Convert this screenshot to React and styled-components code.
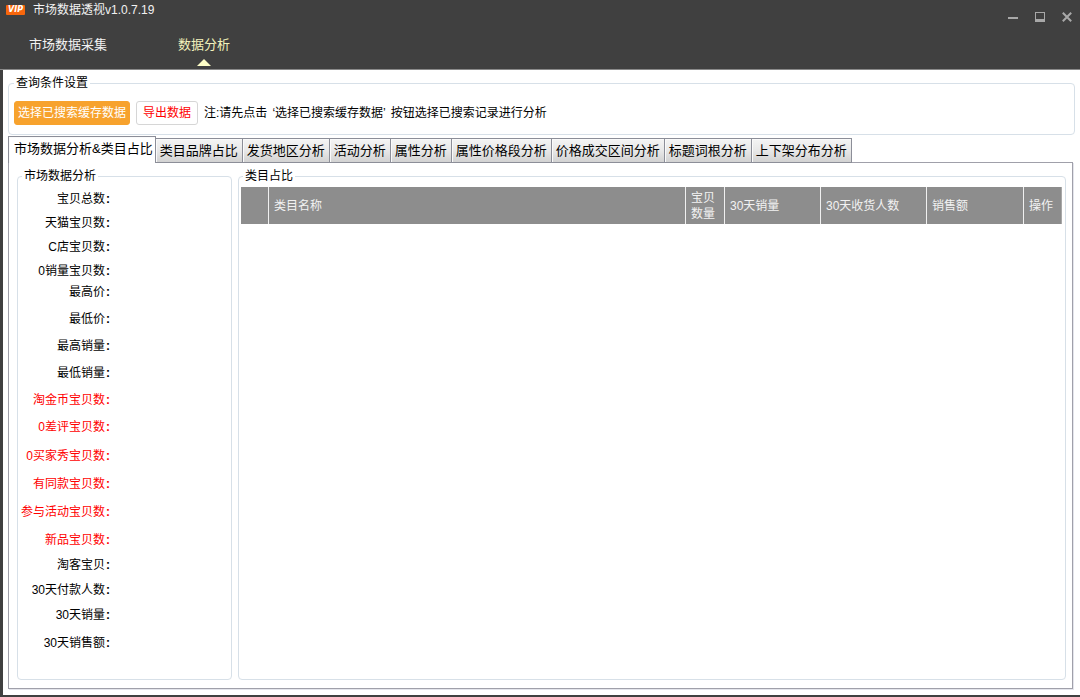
import React, { useState } from "react";
import styled, { createGlobalStyle } from "styled-components";

const GlobalStyle = createGlobalStyle`
  * {
    box-sizing: border-box;
  }

  body {
    margin: 0;
    color: #000;
    font-family: "Liberation Sans", "Noto Sans CJK SC", sans-serif;
    font-size: 12px;
    line-height: 16px;
  }

  button {
    font: inherit;
    padding: 0;
  }
`;

const Window = styled.div`
  display: flex;
  flex-direction: column;
  min-height: 100vh;
  background-color: #fff;
  border-left: 3px solid #404040;
  border-bottom: 2px solid #404040;
`;

const Header = styled.header`
  margin-left: -3px;
  background-color: #404040;
  border-bottom: 1px solid #8a8a8a;
`;

const TitleBar = styled.div`
  display: flex;
  justify-content: space-between;
  align-items: flex-start;
  height: 34px;
`;

const Brand = styled.div`
  display: flex;
  align-items: center;
  gap: 8px;
  height: 20px;
  padding-left: 6px;
`;

const VipBadge = styled.span`
  width: 19px;
  height: 10px;
  border-radius: 1px;
  background-color: #f8660c;
  color: #fff;
  font: italic bold 8px/10px "DejaVu Sans", sans-serif;
  text-align: center;
`;

const AppTitle = styled.h1`
  margin: 0;
  color: #f2f2f2;
  font-size: 12px;
  font-weight: normal;
`;

const WindowControls = styled.div`
  display: flex;
`;

const ControlButton = styled.button`
  display: flex;
  align-items: center;
  justify-content: center;
  width: 27px;
  height: 34px;
  border: 0;
  background: none;
  color: #a8a8a8;
`;

const Nav = styled.nav`
  display: flex;
  gap: 71px;
  height: 35px;
  padding-left: 29px;
`;

const NavLink = styled.a`
  display: flex;
  flex-direction: column;
  align-items: center;
  gap: 3px;
  color: ${props => (props.$active ? "#f2f2bc" : "#f2f2f2")};
  font-size: 13px;
  line-height: 22px;
  text-decoration: none;
`;

const Arrow = styled.span`
  border: 7px solid transparent;
  border-top: 0;
  border-bottom-color: #ffffc8;
`;

const Main = styled.main`
  display: flex;
  flex: 1;
  flex-direction: column;
  padding: 5px 5px 6px;
`;

const GroupBox = styled.fieldset`
  min-width: 0;
  margin: 0;
  padding: ${props => props.$padding};
  border: 1px solid #d7e0e8;
  border-radius: 4px;
`;

const Legend = styled.legend`
  margin-left: ${props => props.$indent || 0};
  padding: 0 2px;
`;

const QueryRow = styled.div`
  display: flex;
  align-items: center;
`;

const ActionButton = styled.button`
  height: 24px;
  margin-right: 6px;
  padding: 0 ${props => (props.$primary ? "3px" : "6px")};
  border: 1px solid ${props => (props.$primary ? "#f7a22d" : "#d6d6d6")};
  border-radius: 3px;
  background-color: ${props => (props.$primary ? "#f7a22d" : "#fff")};
  color: ${props => (props.$primary ? "#fff" : "#f00")};
`;

const Note = styled.p`
  margin: 0;
`;

const Quoted = styled.span`
  padding: 0 5px;
`;

const TabStrip = styled.div`
  display: flex;
  align-items: flex-end;
  height: 27px;
  margin: 1px 0 -1px;
`;

const Tab = styled.button`
  position: relative;
  height: 25px;
  padding: 0 4px;
  border: 1px solid #8c8e98;
  border-left-width: 0;
  background: linear-gradient(#f4f4f4, #e8e8e8 50%, #d2d2d2);
  box-shadow: inset 1px 1px 0 #fafafa;
  color: #000;
  font-size: 13px;
  white-space: nowrap;

  &[aria-selected="true"] {
    height: 27px;
    padding: 0 2px 2px 5px;
    border-left-width: 1px;
    border-bottom: 0;
    background: #fff;
  }
`;

const TabPanel = styled.section`
  display: flex;
  flex: 1;
  gap: 6px;
  margin-right: 2px;
  padding: 5px 6px 8px 8px;
  border: 1px solid #a0a0aa;
  box-shadow: 1px 1px 0 #e4e5ec;
`;

const StatsBox = styled(GroupBox)`
  flex: 0 0 215px;
`;

const CategoryBox = styled(GroupBox)`
  flex: 1;
`;

const StatGroup = styled.dl`
  display: grid;
  grid-template-columns: 91px 1fr;
  row-gap: ${props => props.$gap};
  margin: 0 0 ${props => props.$after};
`;

const StatName = styled.dt`
  text-align: right;
  white-space: nowrap;
  color: ${props => (props.$alert ? "#f00" : "#000")};
`;

const Colon = styled.span`
  display: inline-block;
  width: 6px;
  font-weight: bold;
  text-align: center;
`;

const StatValue = styled.dd`
  margin: 0;
`;

const Table = styled.table`
  width: 100%;
  table-layout: fixed;
  border-collapse: separate;
  border-spacing: 0;
`;

const HeadCell = styled.th`
  width: ${props => props.$width || "auto"};
  height: 37px;
  padding: 2px 5px;
  background-color: #8d8d8d;
  border-right: 1px solid #f0f0f0;
  color: #f2f2f2;
  font-weight: normal;
  text-align: left;

  &:last-child {
    border-right-color: #a8a8a8;
  }
`;

const tabs = [
  "市场数据分析&类目占比",
  "类目品牌占比",
  "发货地区分析",
  "活动分析",
  "属性分析",
  "属性价格段分析",
  "价格成交区间分析",
  "标题词根分析",
  "上下架分布分析"
];

const statGroups = [
  {
    gap: "8px",
    after: "5px",
    rows: [
      { name: "宝贝总数" },
      { name: "天猫宝贝数" },
      { name: "C店宝贝数" },
      { name: "0销量宝贝数" }
    ]
  },
  {
    gap: "11px",
    after: "13px",
    rows: [
      { name: "最高价" },
      { name: "最低价" },
      { name: "最高销量" },
      { name: "最低销量" },
      { name: "淘金币宝贝数", alert: true },
      { name: "0差评宝贝数", alert: true }
    ]
  },
  {
    gap: "12px",
    after: "9px",
    rows: [
      { name: "0买家秀宝贝数", alert: true },
      { name: "有同款宝贝数", alert: true },
      { name: "参与活动宝贝数", alert: true },
      { name: "新品宝贝数", alert: true }
    ]
  },
  {
    gap: "9px",
    after: "12px",
    rows: [{ name: "淘客宝贝" }, { name: "30天付款人数" }, { name: "30天销量" }]
  },
  { gap: "9px", after: "0", rows: [{ name: "30天销售额" }] }
];

const columns = [
  { name: "", width: "28px" },
  { name: "类目名称" },
  { name: "宝贝数量", width: "39px" },
  { name: "30天销量", width: "96px" },
  { name: "30天收货人数", width: "106px" },
  { name: "销售额", width: "97px" },
  { name: "操作", width: "38px" }
];

function Controls() {
  return (
    <WindowControls>
      <ControlButton type="button" aria-label="最小化">
        <svg width="10" height="10" viewBox="0 0 10 10">
          <rect y="5" width="10" height="2" fill="currentColor" />
        </svg>
      </ControlButton>
      <ControlButton type="button" aria-label="最大化">
        <svg width="10" height="10" viewBox="0 0 10 10">
          <rect x="0.5" y="0.5" width="9" height="9" fill="none" stroke="currentColor" />
          <rect y="7" width="10" height="3" fill="currentColor" />
        </svg>
      </ControlButton>
      <ControlButton type="button" aria-label="关闭">
        <svg width="10" height="10" viewBox="0 0 10 10">
          <path d="M0.8 0.8L9.2 9.2M9.2 0.8L0.8 9.2" stroke="currentColor" strokeWidth="2" />
        </svg>
      </ControlButton>
    </WindowControls>
  );
}

function Stats() {
  return (
    <StatsBox $padding="7px 2px">
      <Legend $indent="2px">市场数据分析</Legend>
      {statGroups.map(group => (
        <StatGroup key={group.rows[0].name} $gap={group.gap} $after={group.after}>
          {group.rows.map(row => (
            <React.Fragment key={row.name}>
              <StatName $alert={row.alert}>
                {row.name}
                <Colon>:</Colon>
              </StatName>
              <StatValue />
            </React.Fragment>
          ))}
        </StatGroup>
      ))}
    </StatsBox>
  );
}

function CategoryTable() {
  return (
    <CategoryBox $padding="3px 3px 3px 2px">
      <Legend $indent="2px">类目占比</Legend>
      <Table>
        <thead>
          <tr>
            {columns.map(column => (
              <HeadCell key={column.name} scope="col" $width={column.width}>
                {column.name}
              </HeadCell>
            ))}
          </tr>
        </thead>
        <tbody />
      </Table>
    </CategoryBox>
  );
}

function App() {
  const [activeTab, setActiveTab] = useState(tabs[0]);

  return (
    <Window>
      <GlobalStyle />
      <Header>
        <TitleBar>
          <Brand>
            <VipBadge>VIP</VipBadge>
            <AppTitle>市场数据透视v1.0.7.19</AppTitle>
          </Brand>
          <Controls />
        </TitleBar>
        <Nav>
          <NavLink href="#collect">市场数据采集</NavLink>
          <NavLink href="#analysis" $active>
            数据分析
            <Arrow />
          </NavLink>
        </Nav>
      </Header>
      <Main>
        <GroupBox $padding="10px 5px 9px">
          <Legend>查询条件设置</Legend>
          <QueryRow>
            <ActionButton type="button" $primary>
              选择已搜索缓存数据
            </ActionButton>
            <ActionButton type="button">导出数据</ActionButton>
            <Note>
              注:请先点击<Quoted>‘选择已搜索缓存数据’</Quoted>按钮选择已搜索记录进行分析
            </Note>
          </QueryRow>
        </GroupBox>
        <TabStrip role="tablist">
          {tabs.map(tab => (
            <Tab
              key={tab}
              type="button"
              role="tab"
              aria-selected={tab === activeTab}
              onClick={() => setActiveTab(tab)}
            >
              {tab}
            </Tab>
          ))}
        </TabStrip>
        <TabPanel role="tabpanel" aria-label={activeTab}>
          <Stats />
          <CategoryTable />
        </TabPanel>
      </Main>
    </Window>
  );
}

export default App;
